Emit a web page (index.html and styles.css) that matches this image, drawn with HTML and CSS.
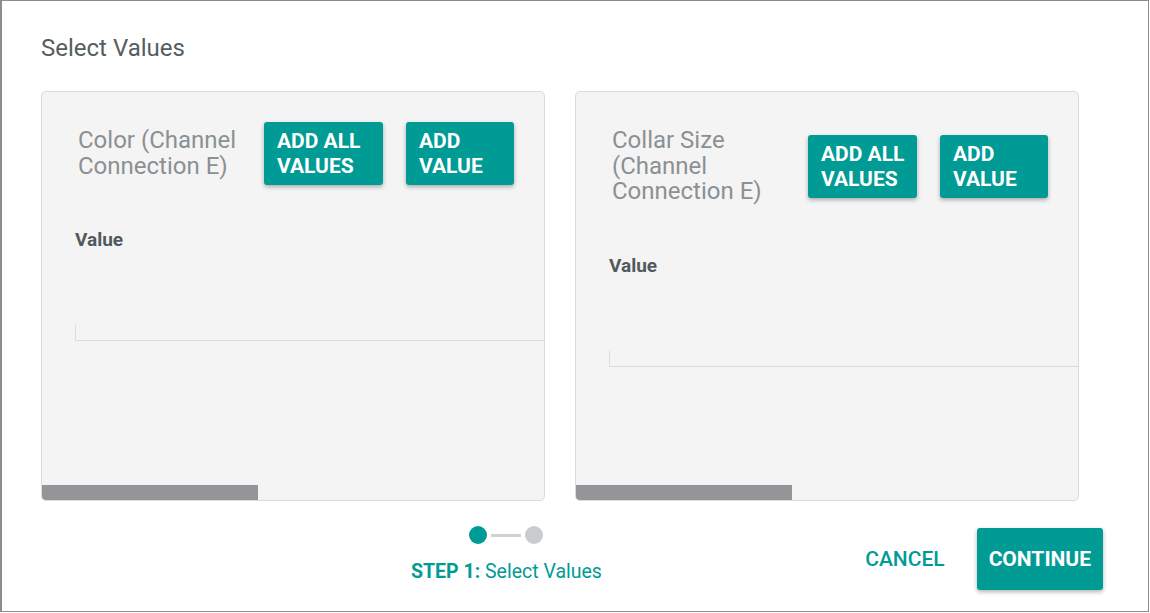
FILE: index.html
```html
<!DOCTYPE html>
<html lang="en">
<head>
    <meta charset="UTF-8">
    <meta name="viewport" content="width=device-width, initial-scale=1.0">
    <title>Select Values</title>
    <link rel="stylesheet" href="styles.css">
</head>
<body>
    <div class="dialog">
        <h2 class="dialog-title">Select Values</h2>

        <div class="cards">
            <div class="card">
                <div class="card-head">
                    <div class="card-title">Color (Channel Connection E)</div>
                    <button class="btn btn-all">ADD ALL VALUES</button>
                    <button class="btn btn-one">ADD VALUE</button>
                </div>
                <div class="card-body">
                    <div class="value-label">Value</div>
                    <div class="value-field"></div>
                </div>
                <div class="scroll-track"><div class="scroll-thumb"></div></div>
            </div>

            <div class="card">
                <div class="card-head">
                    <div class="card-title">Collar Size (Channel Connection E)</div>
                    <button class="btn btn-all narrow">ADD ALL VALUES</button>
                    <button class="btn btn-one">ADD VALUE</button>
                </div>
                <div class="card-body">
                    <div class="value-label">Value</div>
                    <div class="value-field"></div>
                </div>
                <div class="scroll-track"><div class="scroll-thumb"></div></div>
            </div>
        </div>

        <div class="footer">
            <div class="stepper">
                <div class="steps">
                    <span class="dot active"></span>
                    <span class="step-line"></span>
                    <span class="dot"></span>
                </div>
                <div class="step-text"><b>STEP 1:</b> Select Values</div>
            </div>
            <div class="actions">
                <button class="btn-flat">CANCEL</button>
                <button class="btn btn-continue">CONTINUE</button>
            </div>
        </div>
    </div>
</body>
</html>
```

FILE: styles.css
```css
body {
    margin: 0;
    font-family: Roboto, "Liberation Sans", sans-serif;
    background: #fff;
}
.dialog {
    width: 1149px;
    height: 612px;
    box-sizing: border-box;
    border: 1px solid #8c8c8c;
    border-left-width: 2px;
    padding: 33px 0 0 39px;
}
.dialog-title {
    margin: 0 0 29px 0;
    font-size: 24px;
    line-height: 28px;
    font-weight: 400;
    color: #565d61;
}
.cards {
    display: flex;
    gap: 30px;
}
.card {
    width: 504px;
    height: 410px;
    box-sizing: border-box;
    border: 1px solid #dcdcdc;
    border-radius: 5px;
    background-color: #f4f4f4;
    overflow: hidden;
    display: flex;
    flex-direction: column;
}
.card-head {
    display: flex;
    align-items: center;
    gap: 23px;
    padding: 30px 30px 0 36px;
}
.card-title {
    flex: 1;
    margin: 6px 0;
    font-size: 24px;
    line-height: 25.5px;
    color: #8b9093;
}
.btn {
    border: none;
    border-radius: 3px;
    background-color: #009b95;
    color: white;
    font-family: inherit;
    font-size: 21px;
    font-weight: 700;
    line-height: 25px;
    text-align: left;
    padding: 7px 8px 6px 13px;
    box-shadow: 0 2px 4px rgba(0, 0, 0, 0.3);
    cursor: pointer;
}
.btn-all {
    width: 119px;
}
.btn-all.narrow {
    width: 109px;
}
.btn-one {
    width: 108px;
}
.card-body {
    flex: 1;
    padding: 45px 0 0 33px;
}
.value-label {
    font-size: 19px;
    line-height: 20px;
    font-weight: 700;
    color: #52595d;
}
.value-field {
    margin-top: 75px;
    height: 15px;
    margin-right: -20px;
    border-left: 1px solid #dcdcdc;
    border-bottom: 1px solid #dcdcdc;
}
.scroll-track {
    height: 15px;
}
.scroll-thumb {
    width: 216px;
    height: 100%;
    background-color: #939598;
}
.footer {
    display: flex;
    align-items: flex-start;
    margin-top: 25px;
    padding-right: 45px;
}
.stepper {
    margin-left: 370px;
    display: flex;
    flex-direction: column;
    align-items: center;
}
.steps {
    display: flex;
    align-items: center;
    gap: 4px;
}
.dot {
    width: 18px;
    height: 18px;
    border-radius: 50%;
    background-color: #c9cbcd;
}
.dot.active {
    background-color: #009b95;
}
.step-line {
    width: 30px;
    height: 3px;
    background-color: #cfd1d2;
}
.step-text {
    margin-top: 16px;
    font-size: 19.5px;
    line-height: 24px;
    color: #009b95;
}
.step-text b {
    font-weight: 700;
}
.actions {
    margin-left: auto;
    margin-top: 2px;
    display: flex;
    align-items: center;
    gap: 16px;
}
.btn-flat {
    border: none;
    background: none;
    color: #009b95;
    font-family: inherit;
    font-size: 21px;
    font-weight: 500;
    padding: 8px 16px;
    cursor: pointer;
}
.btn-continue {
    height: 62px;
    padding: 0 12px;
    text-align: center;
}
```
